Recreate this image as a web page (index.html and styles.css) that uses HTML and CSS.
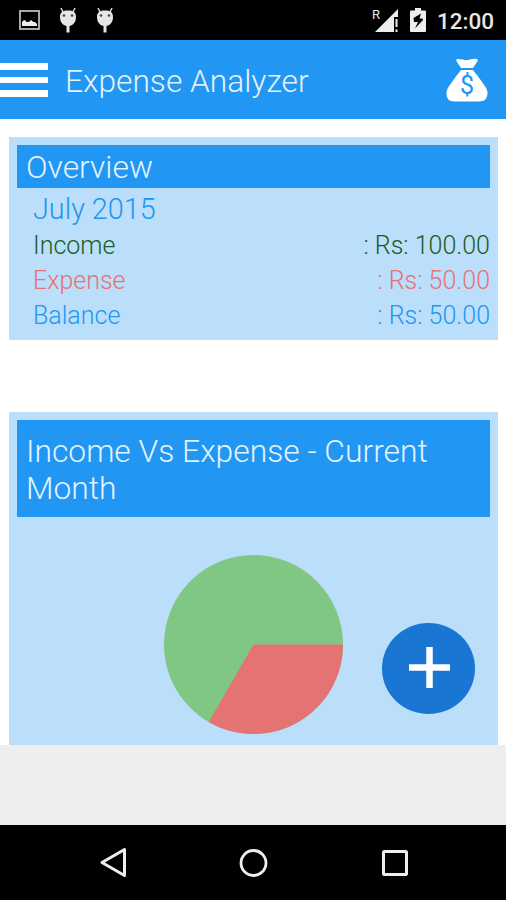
FILE: index.html
```
<!DOCTYPE html>
<html lang="en">
<head>
<meta charset="utf-8">
<title>Expense Analyzer</title>
<link rel="stylesheet" href="styles.css">
</head>
<body>
<div class="statusbar">
<div class="notifications">
<svg width="21" height="20" viewBox="0 0 21 20"><rect x="1" y="1" width="19" height="18" fill="none" stroke="#bbb" stroke-width="1.8"/><path d="M3 16v-4l2-2q1.500 0 2.500 2 1.500-.5 2.500 0l2-2 2.500 2h1.500l2 2v2z" fill="#eee"/></svg>
<svg width="18" height="26" viewBox="0 0 18 26"><path d="M2 1l2 4M16 1l-2 4" stroke="#ddd" stroke-width="1.500"/><path d="M1 10C1 5 4 3.500 9 3.500s8 1.500 8 6.500c0 5-2.500 8-6.500 9v6.500h-3V19C3.500 18 1 15 1 10z" fill="#e6e6e6"/><circle cx="5" cy="8.500" r="1.300" fill="#444"/><circle cx="13" cy="8.500" r="1.300" fill="#444"/></svg>
<svg width="18" height="26" viewBox="0 0 18 26"><path d="M2 1l2 4M16 1l-2 4" stroke="#ddd" stroke-width="1.500"/><path d="M1 10C1 5 4 3.500 9 3.500s8 1.500 8 6.500c0 5-2.500 8-6.500 9v6.500h-3V19C3.500 18 1 15 1 10z" fill="#e6e6e6"/><circle cx="5" cy="8.500" r="1.300" fill="#444"/><circle cx="13" cy="8.500" r="1.300" fill="#444"/></svg>
</div>
<div class="roaming">R</div>
<svg class="signal" width="23" height="23" viewBox="0 0 23 23"><path d="M0 23L23 0v8h-4v15z" fill="#eee"/><path d="M20.500 10h2v8h-2zM20.500 20.500h2V23h-2z" fill="#eee"/></svg>
<svg class="battery" width="16" height="24" viewBox="0 0 16 24"><path d="M5 0h6v2.500h4q1 0 1 1V23q0 1-1 1H1q-1 0-1-1V3.500q0-1 1-1h4z" fill="#eee"/><path d="M11 5.500L3.500 10l.5 4h4L5 20.500 13 12l-.5-1.500H9.500z" fill="#000"/></svg>
<div class="clock">12:00</div>
</div>
<div class="appbar">
<div class="menu"><div></div><div></div><div></div></div>
<div class="title">Expense Analyzer</div>
<svg class="bag" width="42" height="44" viewBox="0 0 42 44">
<path d="M11 1q4 0 6 .5 3.500 1.200 7 0 3-1 7-.5 1.500.5 0 3l-4 6H15l-4-6q-1.500-2.500 0-3z" fill="#fff"/>
<path d="M15 12h12c2 3 4 5 6.500 8.500C38 27 42 31 41.500 36q-.5 7.500-8 7.500h-25q-8 0-8-7.500C0 31 4 27 8.500 20.500 11 17 13 15 15 12z" fill="#fff"/>
<text x="21" y="36" text-anchor="middle" class="dollar">$</text>
</svg>
</div>
<div class="content">
<div class="card">
<div class="heading">Overview</div>
<div class="month">July 2015</div>
<div class="row income"><span>Income</span><span>: Rs: 100.00</span></div>
<div class="row expense"><span>Expense</span><span>: Rs: 50.00</span></div>
<div class="row balance"><span>Balance</span><span>: Rs: 50.00</span></div>
</div>
<div class="card chart">
<div class="heading tall">Income Vs Expense - Current Month</div>
<svg class="pie" width="180" height="180" viewBox="0 0 180 180"><circle cx="89.500" cy="89.500" r="89.500" fill="#81c784"/><path d="M89.500 89.500H179A89.500 89.500 0 0 1 44.750 167z" fill="#e57373"/></svg>
</div>
<div class="fab"><svg width="41" height="41" viewBox="0 0 41 41"><path d="M0 20.500h41M20.500 0v41" stroke="#fff" stroke-width="6.500"/></svg></div>
</div>
<div class="adspace"></div>
<div class="navbar">
<svg width="28" height="32" viewBox="0 0 28 32"><path d="M3 15.500L25.500 2.500v26z" fill="none" stroke="#eee" stroke-width="3" stroke-linejoin="round"/></svg>
<svg width="30" height="30" viewBox="0 0 30 30"><circle cx="14.500" cy="15" r="12.500" fill="none" stroke="#eee" stroke-width="2.800"/></svg>
<svg width="28" height="28" viewBox="0 0 28 28"><rect x="2.500" y="2.500" width="23" height="23" rx="1" fill="none" stroke="#eee" stroke-width="3"/></svg>
</div>
</body>
</html>
```
FILE: styles.css
```
* { box-sizing: border-box; }
body {
margin: 0;
height: 900px;
display: flex;
flex-direction: column;
overflow: hidden;
background-color: #fff;
font-family: Roboto, sans-serif;
font-weight: 300;
}
svg { display: block; flex: none; }
.statusbar {
height: 40px;
flex: none;
display: flex;
align-items: center;
padding-right: 12px;
background-color: #000;
color: #e6e6e6;
}
.notifications {
display: flex;
align-items: center;
gap: 20px;
padding-left: 19px;
margin-right: auto;
}
.notifications svg + svg { margin-left: -1px; }
.roaming {
font-size: 13px;
font-weight: 400;
line-height: 12px;
padding-bottom: 11px;
}
.signal { margin-left: -5px; }
.battery { margin: 0 11px 0 12px; }
.clock {
font-size: 22.5px;
font-weight: 500;
padding-top: 2px;
}
.appbar {
height: 79px;
flex: none;
display: flex;
align-items: center;
padding: 1px 18px 0 0;
background-color: #2196f3;
}
.menu {
width: 48px;
display: flex;
flex-direction: column;
gap: 7px;
}
.menu div {
height: 6.5px;
background-color: #fff;
}
.title {
flex: 1;
padding-left: 17px;
padding-top: 3px;
font-size: 31.7px;
color: #e3f2fd;
}
.dollar {
font: 400 25px Roboto, sans-serif;
fill: #2196f3;
}
.content {
height: 626px;
flex: none;
position: relative;
overflow: hidden;
padding: 18px 8px 0 9px;
}
.card {
height: 203px;
padding: 8px;
background-color: #bbdefb;
}
.heading {
height: 43px;
padding: 4px 8px 4px 9px;
line-height: 37px;
font-size: 31.8px;
color: #e3f2fd;
background-color: #2196f3;
}
.tall {
height: 97px;
padding-top: 13px;
}
.month {
height: 41px;
padding-left: 16px;
line-height: 42px;
font-size: 28.8px;
color: #2196f3;
}
.row {
display: flex;
justify-content: space-between;
padding-left: 16px;
font-size: 25px;
line-height: 34.8px;
}
.income { color: #1b5e20; }
.expense { color: #e57373; }
.balance { color: #2196f3; }
.chart {
height: 400px;
margin-top: 72px;
}
.pie { margin: 37.5px auto 0; }
/* floating add button */
.fab {
position: absolute;
left: 382px;
top: 504px;
width: 93px;
height: 91px;
padding: 0 0 2px 1px;
display: flex;
align-items: center;
justify-content: center;
border-radius: 50%;
background-color: #1976d2;
}
.adspace {
height: 80px;
flex: none;
background-color: #eee;
}
.navbar {
height: 75px;
flex: none;
display: flex;
align-items: center;
justify-content: space-between;
padding: 0 97px 0 99px;
background-color: #000;
}
```
